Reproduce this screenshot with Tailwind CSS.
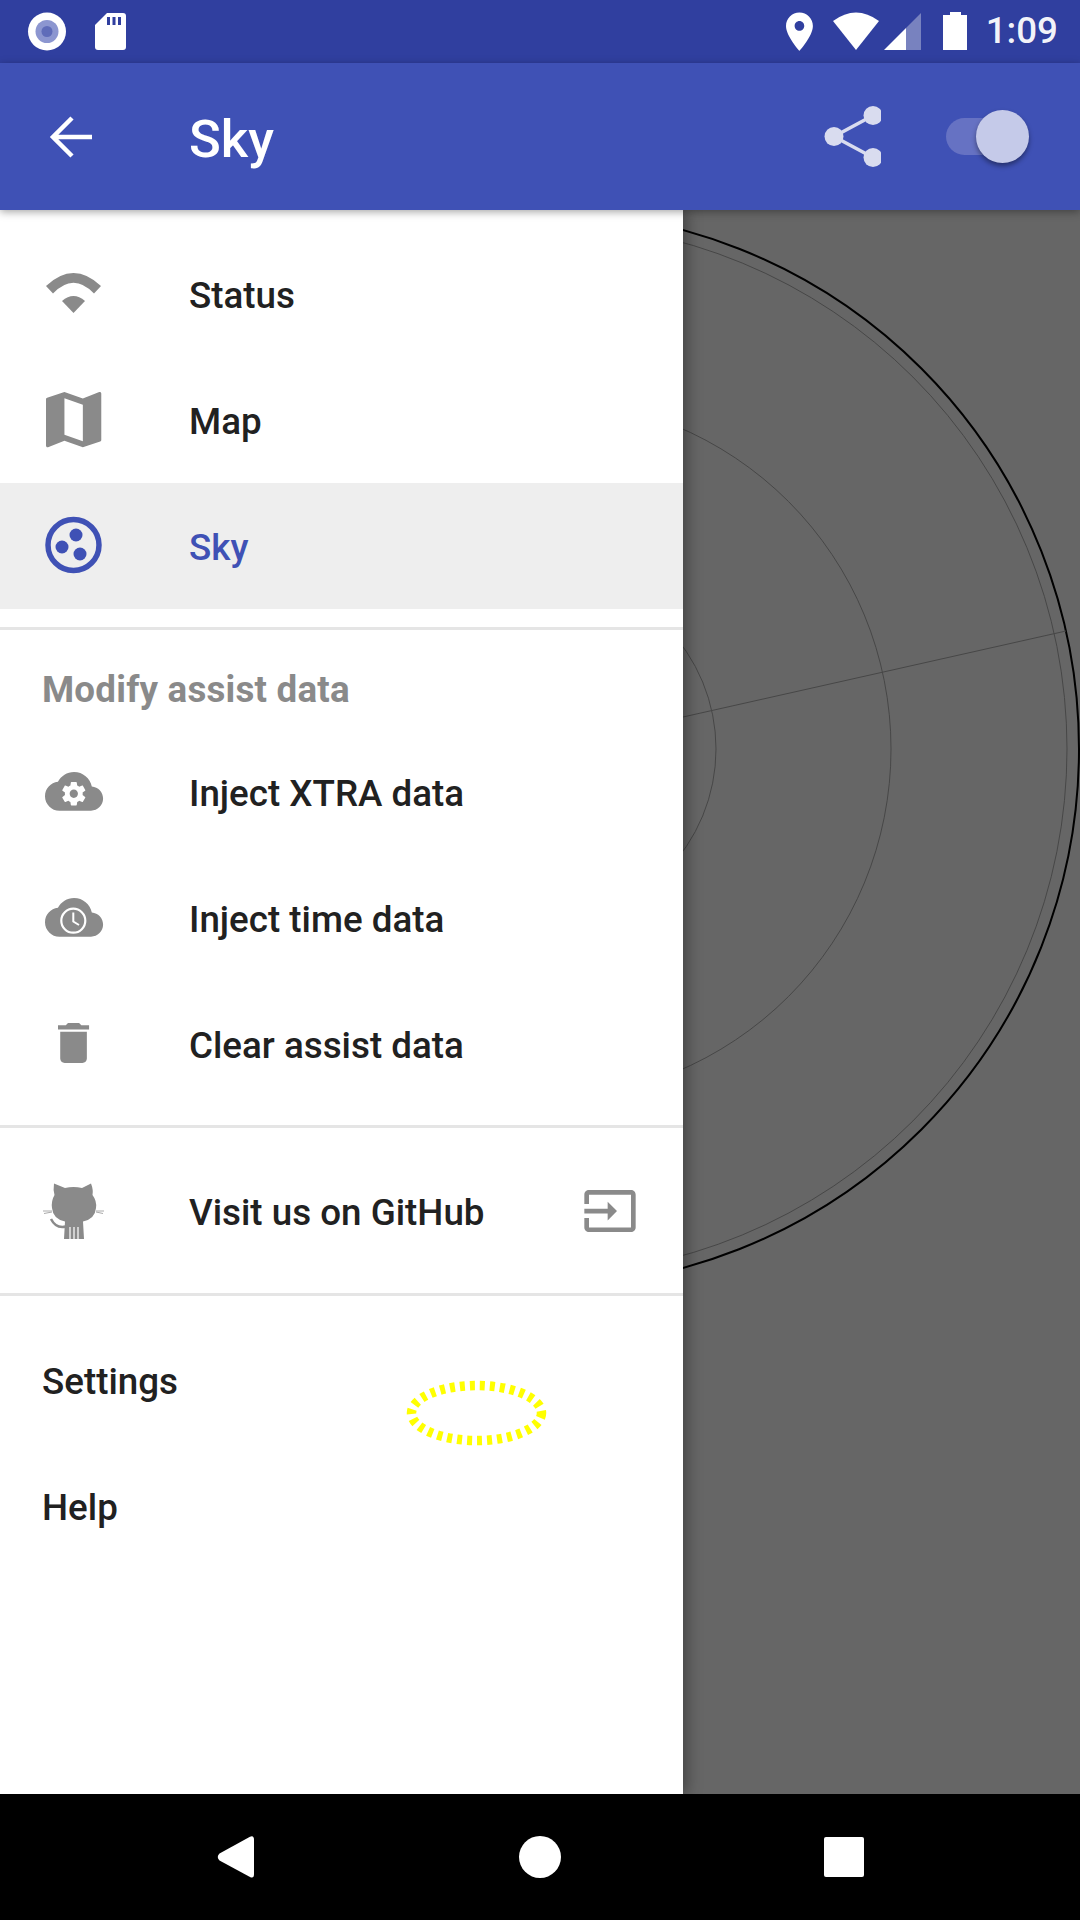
<!DOCTYPE html>
<html>
<head>
<meta charset="utf-8">
<script src="https://cdn.jsdelivr.net/npm/@tailwindcss/browser@4"></script>
</head>
<body class="font-['Roboto',sans-serif]">
<div class="relative w-[1080px] h-[1920px] flex flex-col overflow-hidden bg-white">
  <!-- status bar -->
  <div class="h-[63px] shrink-0 bg-[#303f9f] relative z-20 flex items-center justify-between">
    <svg width="140" height="63" viewBox="0 0 140 63">
      <circle cx="47" cy="31.5" r="19" fill="#fff"/><circle cx="47" cy="31.5" r="11.5" fill="#8c96d0"/><circle cx="47" cy="31.5" r="5.5" fill="#5f6cb9"/>
      <path d="M107 13H123a3 3 0 0 1 3 3V47a3 3 0 0 1-3 3H98a3 3 0 0 1-3-3V25Z" fill="#fff"/>
      <path d="M107 17h3v8h-3zM112.500 17h3v8h-3zM118 17h3v8h-3z" fill="#303f9f"/>
    </svg>
    <div class="flex items-center h-full">
      <svg width="200" height="63" viewBox="769 0 200 63">
        <g transform="translate(776.400 8.600) scale(1.92)"><path d="M12 2C8.130 2 5 5.130 5 9c0 5.250 7 13 7 13s7-7.750 7-13c0-3.870-3.130-7-7-7zm0 9.500c-1.380 0-2.500-1.120-2.500-2.500s1.120-2.500 2.500-2.500 2.500 1.120 2.500 2.500-1.120 2.500-2.500 2.500z" fill="#fff"/></g>
        <path d="M833 21Q856 4 879 21L856 50Z" fill="#fff"/>
        <path d="M906 28L921 13V50H906Z" fill="#7882bf"/>
        <path d="M884 50L906 28V50Z" fill="#fff"/>
        <path d="M950 12H961V15H967V50H943V15H950Z" fill="#fff"/>
      </svg>
      <span class="text-[36.75px] font-medium text-white/95 leading-none ml-[17px] mr-[22px]">1:09</span>
    </div>
  </div>
  <!-- toolbar -->
  <div class="h-[147px] shrink-0 bg-[#3f51b5] relative z-20 flex items-center shadow-[0_2px_8px_rgba(0,0,0,0.35)]">
    <div class="w-[189px] shrink-0 flex items-center pl-[46px]">
      <svg width="52" height="52" viewBox="46 110 52 52" fill="none" stroke="#fff" stroke-width="4.500"><path d="M92 136H54M72 117L53 136L72 155"/></svg>
    </div>
    <span class="text-[52.5px] font-medium text-white leading-none flex-1 pt-[5px]">Sky</span>
    <svg width="60" height="63" viewBox="820 104.500 60 63" class="mr-[65px]">
      <path d="M872 115L833 136L872 157" fill="none" stroke="#d9dcef" stroke-width="3.500"/>
      <circle cx="872" cy="115" r="9.500" fill="#d9dcef"/><circle cx="833" cy="136" r="9.500" fill="#d9dcef"/><circle cx="872" cy="157" r="9.500" fill="#d9dcef"/>
    </svg>
    <div class="relative w-[83px] h-[37px] mr-[51px]">
      <div class="w-[64px] h-[37px] rounded-full bg-[#6672c3]"></div>
      <div class="absolute right-0 top-[-8px] w-[53px] h-[53px] rounded-full bg-[#c5cae9] shadow-[0_3px_5px_rgba(0,0,0,0.4)]"></div>
    </div>
  </div>
  <!-- content -->
  <div class="flex flex-1 min-h-0">
    <nav class="w-[683px] shrink-0 bg-white relative z-10 pt-[21px] shadow-[4px_0_14px_rgba(0,0,0,0.35)]">
      <a class="flex items-center h-[126px]">
        <svg class="ml-[37px] mr-[79px] shrink-0" width="73" height="74" viewBox="37 257 73 74" fill="#8a8a8a"><path d="M46 286Q73.500 260 101 286L94 293.500Q73.500 272 53 293.500Z"/><path d="M62 301Q73.500 291 85 301L73.500 313Z"/></svg>
        <span class="text-[36.75px] font-medium text-[#212121] pt-[3px]">Status</span>
      </a>
      <a class="flex items-center h-[126px]">
        <svg class="ml-[37px] mr-[79px] shrink-0" width="73" height="74" viewBox="37 383 73 74" fill="#8a8a8a"><g transform="translate(36.800 382.800) scale(3.07)"><path d="M20.500 3l-.16.03L15 5.100 9 3 3.360 4.900c-.21.07-.36.25-.36.48V20.500c0 .28.22.5.5.5l.16-.03L9 18.900l6 2.100 5.640-1.900c.21-.07.36-.25.36-.48V3.500c0-.28-.22-.5-.5-.5zM15 19l-6-2.110V5l6 2.110V19z"/></g></svg>
        <span class="text-[36.75px] font-medium text-[#212121] pt-[3px]">Map</span>
      </a>
      <a class="flex items-center h-[126px] bg-[#eeeeee]">
        <svg class="ml-[37px] mr-[79px] shrink-0" width="73" height="74" viewBox="37 509 73 74"><circle cx="73.500" cy="545" r="25.500" fill="none" stroke="#3f51b5" stroke-width="5.500"/><g fill="#3f51b5"><circle cx="76" cy="535" r="6.500"/><circle cx="62" cy="547" r="6.500"/><circle cx="80" cy="554" r="6.500"/></g></svg>
        <span class="text-[36.75px] font-medium text-[#3f51b5] pt-[3px]">Sky</span>
      </a>
      <div class="h-[3px] bg-[#e5e5e5] mt-[18px]"></div>
      <div class="h-[100px] pt-[20px] pl-[42px] flex items-center text-[36.75px] font-bold tracking-[0.2px] text-[#8a8a8a]">Modify assist data</div>
      <a class="flex items-center h-[126px]">
        <svg class="ml-[37px] mr-[79px] shrink-0" width="73" height="74" viewBox="37 756 73 74"><g transform="translate(45 762.300) scale(2.42)"><path fill="#8a8a8a" d="M19.350 10.040C18.670 6.590 15.640 4 12 4 9.110 4 6.600 5.640 5.350 8.040 2.340 8.360 0 10.910 0 14c0 3.310 2.690 6 6 6h13c2.760 0 5-2.240 5-5 0-2.640-2.050-4.780-4.650-4.960z"/><g transform="translate(11.900 13) scale(.49) translate(-12 -12)"><path fill="#fff" d="M19.430 12.980c.04-.32.07-.64.07-.98s-.03-.66-.07-.98l2.110-1.650c.19-.15.24-.42.12-.64l-2-3.460c-.12-.22-.39-.3-.61-.22l-2.490 1c-.52-.4-1.080-.73-1.690-.98l-.38-2.650C14.460 2.180 14.250 2 14 2h-4c-.25 0-.46.18-.49.42l-.38 2.650c-.61.25-1.170.59-1.690.98l-2.490-1c-.23-.09-.49 0-.61.22l-2 3.460c-.13.22-.07.49.12.64l2.110 1.650c-.04.32-.07.65-.07.98s.03.66.07.98l-2.110 1.650c-.19.15-.24.42-.12.64l2 3.460c.12.22.39.3.61.22l2.490-1c.52.4 1.080.73 1.690.98l.38 2.650c.03.24.24.42.49.42h4c.25 0 .46-.18.49-.42l.38-2.650c.61-.25 1.170-.59 1.690-.98l2.490 1c.23.09.49 0 .61-.22l2-3.460c.12-.22.07-.49-.12-.64l-2.110-1.650zM12 15.500c-1.930 0-3.500-1.570-3.500-3.500s1.570-3.500 3.500-3.500 3.500 1.570 3.500 3.500-1.570 3.500-3.500 3.500z"/></g></g></svg>
        <span class="text-[36.75px] font-medium text-[#212121] pt-[1px]">Inject XTRA data</span>
      </a>
      <a class="flex items-center h-[126px]">
        <svg class="ml-[37px] mr-[79px] shrink-0" width="73" height="74" viewBox="37 882 73 74"><g transform="translate(45 888.300) scale(2.42)"><path fill="#8a8a8a" d="M19.350 10.040C18.670 6.590 15.640 4 12 4 9.110 4 6.600 5.640 5.350 8.040 2.340 8.360 0 10.910 0 14c0 3.310 2.690 6 6 6h13c2.760 0 5-2.240 5-5 0-2.640-2.050-4.780-4.650-4.960z"/></g><circle cx="73.300" cy="920.700" r="12" fill="none" stroke="#fff" stroke-width="2.200"/><path d="M73.300 912.500V921.500L79 925" fill="none" stroke="#fff" stroke-width="2"/></svg>
        <span class="text-[36.75px] font-medium text-[#212121] pt-[1px]">Inject time data</span>
      </a>
      <a class="flex items-center h-[126px]">
        <svg class="ml-[37px] mr-[79px] shrink-0" width="73" height="74" viewBox="37 1008 73 74" fill="#8a8a8a"><g transform="translate(46.900 1016.300) scale(2.22)"><path d="M6 19c0 1.100.9 2 2 2h8c1.100 0 2-.9 2-2V7H6v12zM19 4h-3.500l-1-1h-5l-1 1H5v2h14V4z"/></g></svg>
        <span class="text-[36.75px] font-medium text-[#212121] pt-[1px]">Clear assist data</span>
      </a>
      <div class="h-[3px] bg-[#e5e5e5] mt-[17px]"></div>
      <a class="flex items-center h-[126px] mt-[21px]">
        <svg class="ml-[37px] mr-[79px] shrink-0" width="73" height="74" viewBox="37 1175 73 74">
          <path fill="#8a8a8a" d="M54 1183.500L65 1188Q73.500 1186 82 1188L91 1183.500Q93.500 1190 92.500 1195Q97 1201 96 1208Q95 1219 83 1221.500L84 1239H64L65 1221.500Q53 1219 52 1208Q51 1201 54.500 1195Q53 1190 54 1183.500Z"/>
          <path d="M70 1227V1239M74 1227V1239M78 1227V1239" stroke="#fff" stroke-width="1.200" fill="none"/>
          <path d="M51 1219Q56 1229 66 1226.500" stroke="#8a8a8a" stroke-width="2.500" fill="none"/>
          <path d="M43 1211H52M44 1213.500L52 1212M96 1211H104M96 1212L103 1213.500" stroke="#aaaaaa" stroke-width="1" fill="none"/>
        </svg>
        <span class="text-[36.75px] font-medium text-[#212121] flex-1 pt-[2px]">Visit us on GitHub</span>
        <svg class="mr-[45px] shrink-0" width="56" height="56" viewBox="0 0.400 24 24" fill="#8a8a8a"><path d="M21 3.010H3c-1.100 0-2 .9-2 2V9h2V4.990h18v14.030H3V15H1v4.010c0 1.100.9 1.980 2 1.980h18c1.100 0 2-.88 2-1.980v-14c0-1.110-.9-2-2-2zM11 16l4-4-4-4v3H1v2h10v3z"/></svg>
      </a>
      <div class="h-[3px] bg-[#e5e5e5] mt-[18px]"></div>
      <a class="flex items-center h-[126px] mt-[22px] pl-[42px] pt-[1px] text-[36.75px] font-medium text-[#212121]">Settings</a>
      <a class="flex items-center h-[126px] pl-[42px] pt-[1px] text-[36.75px] font-medium text-[#212121]">Help</a>
    </nav>
    <div class="flex-1 bg-[#666666] overflow-hidden">
      <svg width="397" height="1584" viewBox="683 210 397 1584" fill="none">
        <circle cx="541" cy="749" r="175" stroke="#474747" stroke-width="1"/>
        <circle cx="541" cy="749" r="350" stroke="#474747" stroke-width="1"/>
        <circle cx="541" cy="749" r="526" stroke="#474747" stroke-width="1"/>
        <circle cx="541" cy="749" r="538" stroke="#000" stroke-width="2"/>
        <path d="M683 717L1066 631" stroke="#474747" stroke-width="1"/>
      </svg>
    </div>
  </div>
  <!-- nav bar -->
  <div class="h-[126px] shrink-0 bg-black flex items-center justify-center relative z-20">
    <svg width="1080" height="126" viewBox="0 1794 1080 126" fill="#fff">
      <path d="M219.500 1853.500L250 1836.800Q254 1835 254 1840V1874Q254 1879 250 1877L219.500 1860.500Q216 1857 219.500 1853.500Z"/>
      <circle cx="540" cy="1857" r="21"/>
      <rect x="824" y="1837" width="40" height="40" rx="2"/>
    </svg>
  </div>
  <!-- touch marker -->
  <svg class="absolute left-[400px] top-[1375px] z-30" width="154" height="76" viewBox="400 1375 154 76" fill="none"><ellipse cx="476.500" cy="1413" rx="65" ry="27.500" stroke="#ffff00" stroke-width="9.500" stroke-dasharray="5 5"/></svg>
</div>
</body>
</html>
